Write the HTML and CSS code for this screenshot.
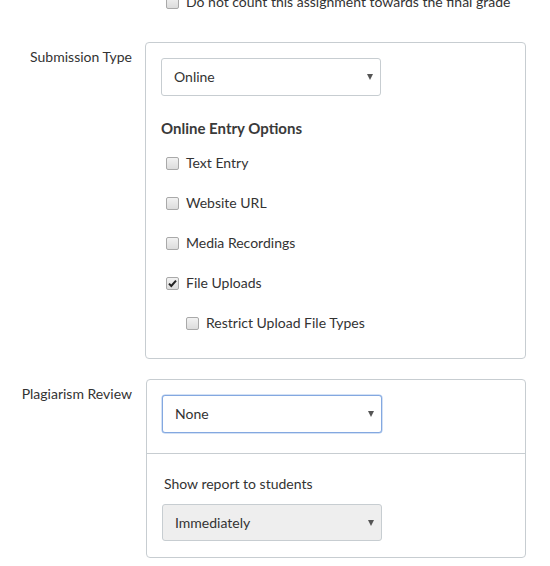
FILE: index.html
```html
<!DOCTYPE html>
<html>
<head>
<meta charset="utf-8">
<link rel="stylesheet" href="styles.css">
</head>
<body>
<div class="page">
  <div class="top-row">
    <span class="cb"></span>
    <span class="cb-label">Do not count this assignment towards the final grade</span>
  </div>

  <div class="row row-submission">
    <div class="label">Submission Type</div>
    <div class="box box-submission">
      <div class="select"><span class="sel-text">Online</span><span class="arrow"></span></div>
      <div class="heading">Online Entry Options</div>
      <div class="opts">
        <div class="opt"><span class="cb"></span><span class="cb-label">Text Entry</span></div>
        <div class="opt"><span class="cb"></span><span class="cb-label">Website URL</span></div>
        <div class="opt"><span class="cb"></span><span class="cb-label">Media Recordings</span></div>
        <div class="opt"><span class="cb checked"><svg viewBox="0 0 13 13" width="13" height="13"><path d="M3 6.6 L5.3 9 L10 3.6" fill="none" stroke="#222" stroke-width="2"/></svg></span><span class="cb-label">File Uploads</span></div>
        <div class="opt opt-indent"><span class="cb"></span><span class="cb-label">Restrict Upload File Types</span></div>
      </div>
    </div>
  </div>

  <div class="row row-plag">
    <div class="label">Plagiarism Review</div>
    <div class="box box-plag">
      <div class="plag-top">
        <div class="select focus"><span class="sel-text">None</span><span class="arrow"></span></div>
      </div>
      <div class="plag-bottom">
        <div class="sub-label">Show report to students</div>
        <div class="select disabled"><span class="sel-text">Immediately</span><span class="arrow"></span></div>
      </div>
    </div>
  </div>
</div>
</body>
</html>
```

FILE: styles.css
```css
* { box-sizing: border-box; }
html, body {
  margin: 0;
  padding: 0;
  background: #fff;
}
body {
  font-family: Lato, "Open Sans", "Liberation Sans", sans-serif;
  font-size: 14px;
  color: #333;
  line-height: 20px;
  overflow: hidden;
}
.page {
  width: 550px;
  height: 566px;
}
.top-row {
  display: flex;
  align-items: center;
  margin-top: -8px;
  padding-left: 166px;
  height: 20px;
}
.cb {
  width: 13px;
  height: 13px;
  border: 1px solid #a9a9a9;
  border-radius: 2px;
  background: linear-gradient(#f2f2f2, #dcdcdc);
  flex: none;
  display: inline-flex;
  align-items: center;
  justify-content: center;
}
.cb svg { display: block; margin: -1px; }
.cb-label {
  margin-left: 7px;
  white-space: nowrap;
}
.row {
  display: grid;
  grid-template-columns: 132px 381px;
  column-gap: 13px;
  align-items: start;
}
.row-submission { margin-top: 30px; }
.row-plag {
  margin-top: 20px;
  grid-template-columns: 132px 380px;
  column-gap: 14px;
}
.label {
  text-align: right;
  padding-top: 5px;
  white-space: nowrap;
}
.row-plag .label { padding-top: 5px; }
.box {
  border: 1px solid #c7cdd1;
  border-radius: 4px;
}
.box-submission {
  padding: 15px 15px 15px 15px;
}
.select {
  position: relative;
  width: 220px;
  height: 38px;
  border: 1px solid #c7cdd1;
  border-radius: 3px;
  background: #fff;
  display: flex;
  align-items: center;
  padding-left: 12px;
}
.select.focus {
  border-color: #83a8e0;
  box-shadow: 0 0 0 0.5px #a7c3ec;
}
.select.disabled {
  background: #eeeeee;
  height: 37px;
}
.arrow {
  position: absolute;
  right: 7px;
  top: 50%;
  margin-top: -3px;
  width: 0;
  height: 0;
  border-left: 3px solid transparent;
  border-right: 3px solid transparent;
  border-top: 6px solid #555;
}
.heading {
  margin-top: 22px;
  font-weight: 700;
  font-size: 15px;
  line-height: 20px;
  color: #3a3a3a;
}
.opts {
  margin-top: 5px;
}
.opt {
  height: 40px;
  display: flex;
  align-items: center;
  padding-left: 5px;
}
.opt-indent { padding-left: 25px; }
.plag-top {
  padding: 15px 15px 20px 15px;
  border-bottom: 1px solid #c7cdd1;
}
.plag-bottom {
  padding: 20px 15px 16px 15px;
}
.sub-label {
  padding-left: 2px;
  margin-bottom: 10px;
}
```
